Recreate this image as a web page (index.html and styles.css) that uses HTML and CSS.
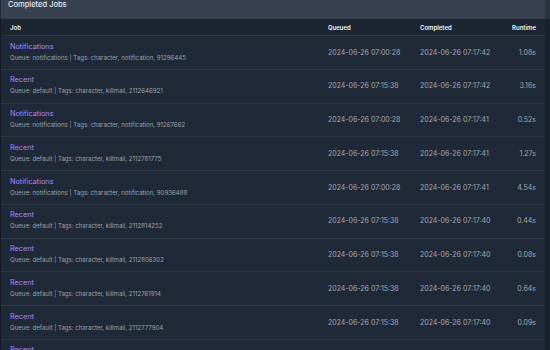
FILE: index.html
```html
<!DOCTYPE html>
<html>
<head>
<meta charset="utf-8">
<link rel="stylesheet" href="styles.css">
</head>
<body>
<div class="panel">
  <div class="title-bar">Completed Jobs</div>
  <div class="table">
    <div class="row head">
      <div>Job</div><div>Queued</div><div>Completed</div><div class="num">Runtime</div>
    </div>
    <div class="row">
      <div><div class="name">Notifications</div><div class="meta">Queue: notifications | Tags: character, notification, 91296445</div></div>
      <div class="date">2024-06-26 07:00:28</div><div class="date">2024-06-26 07:17:42</div><div class="num date">1.08s</div>
    </div>
    <div class="row">
      <div><div class="name">Recent</div><div class="meta">Queue: default | Tags: character, killmail, 2112646921</div></div>
      <div class="date">2024-06-26 07:15:38</div><div class="date">2024-06-26 07:17:42</div><div class="num date">3.16s</div>
    </div>
    <div class="row">
      <div><div class="name">Notifications</div><div class="meta">Queue: notifications | Tags: character, notification, 91267662</div></div>
      <div class="date">2024-06-26 07:00:28</div><div class="date">2024-06-26 07:17:41</div><div class="num date">0.52s</div>
    </div>
    <div class="row">
      <div><div class="name">Recent</div><div class="meta">Queue: default | Tags: character, killmail, 2112781775</div></div>
      <div class="date">2024-06-26 07:15:38</div><div class="date">2024-06-26 07:17:41</div><div class="num date">1.27s</div>
    </div>
    <div class="row">
      <div><div class="name">Notifications</div><div class="meta">Queue: notifications | Tags: character, notification, 90936488</div></div>
      <div class="date">2024-06-26 07:00:28</div><div class="date">2024-06-26 07:17:41</div><div class="num date">4.54s</div>
    </div>
    <div class="row">
      <div><div class="name">Recent</div><div class="meta">Queue: default | Tags: character, killmail, 2112814252</div></div>
      <div class="date">2024-06-26 07:15:38</div><div class="date">2024-06-26 07:17:40</div><div class="num date">0.44s</div>
    </div>
    <div class="row">
      <div><div class="name">Recent</div><div class="meta">Queue: default | Tags: character, killmail, 2112806302</div></div>
      <div class="date">2024-06-26 07:15:38</div><div class="date">2024-06-26 07:17:40</div><div class="num date">0.08s</div>
    </div>
    <div class="row">
      <div><div class="name">Recent</div><div class="meta">Queue: default | Tags: character, killmail, 2112761914</div></div>
      <div class="date">2024-06-26 07:15:38</div><div class="date">2024-06-26 07:17:40</div><div class="num date">0.64s</div>
    </div>
    <div class="row">
      <div><div class="name">Recent</div><div class="meta">Queue: default | Tags: character, killmail, 2112777904</div></div>
      <div class="date">2024-06-26 07:15:38</div><div class="date">2024-06-26 07:17:40</div><div class="num date">0.09s</div>
    </div>
    <div class="row">
      <div><div class="name">Recent</div><div class="meta">Queue: default | Tags: character, killmail, 2112790011</div></div>
      <div class="date">2024-06-26 07:15:38</div><div class="date">2024-06-26 07:17:40</div><div class="num date">0.11s</div>
    </div>
  </div>
</div>
</body>
</html>
```
FILE: styles.css
```css
html, body {
  margin: 0;
  padding: 0;
  background: #151a23;
  overflow: hidden;
  height: 350px;
}
body {
  font-family: Inter, "Noto Sans", sans-serif;
}
.panel {
  width: 550px;
}
.title-bar {
  background: #374151;
  color: #e5e7eb;
  font-size: 7.5px;
  font-weight: 500;
  line-height: 10px;
  padding: 0 8px 9px 7px;
  border-left: 1px solid rgba(0, 0, 0, 0.35);
  border-right: 5px solid rgba(0, 0, 0, 0.22);
}
.table {
  background: #1f2937;
  border-left: 1px solid rgba(0, 0, 0, 0.35);
  border-right: 5px solid rgba(0, 0, 0, 0.22);
}
.row {
  display: grid;
  grid-template-columns: 318px 92px 1fr auto;
  align-items: center;
  padding: 5.5px 9px 6.25px 9px;
  border-bottom: 1px solid #2e3847;
}
.row.head {
  background: #1d2532;
  padding: 0 9px;
  height: 16px;
  color: #f3f4f6;
  font-size: 6px;
  font-weight: 600;
}
.num {
  text-align: right;
}
.name {
  color: #a78bfa;
  font-size: 7.3px;
  line-height: 9.5px;
  margin-bottom: 1.5px;
}
.meta {
  color: #9ca3af;
  font-size: 6.1px;
  line-height: 10px;
}
.date {
  color: #a3aab6;
  font-size: 7px;
}
```
